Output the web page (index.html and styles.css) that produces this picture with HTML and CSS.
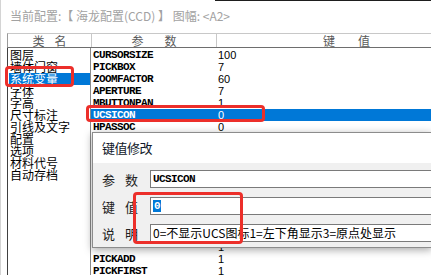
FILE: index.html
```html
<!DOCTYPE html>
<html lang="zh-CN">
<head>
    <meta charset="UTF-8">
    <title>系统变量</title>
    <link rel="stylesheet" href="styles.css">
</head>
<body>
    <div class="window">
        <!-- Current config caption -->
        <div class="caption">当前配置:【 海龙配置(CCD) 】 图幅: &lt;A2&gt;</div>

        <div class="table">
            <div class="head">
                <div class="hcell col-cat"><span>类</span><span>名</span></div>
                <div class="hcell col-name"><span>参</span><span>数</span></div>
                <div class="hcell col-value"><span>键</span><span>值</span></div>
            </div>

            <div class="body">
                <ul class="cats">
                    <li>图层</li>
                    <li>墙体门窗</li>
                    <li class="selected">系统变量</li>
                    <li>字体</li>
                    <li>字高</li>
                    <li>尺寸标注</li>
                    <li>引线及文字</li>
                    <li>配置</li>
                    <li>选项</li>
                    <li>材料代号</li>
                    <li>自动存档</li>
                </ul>

                <div class="vars">
                    <div class="row"><span class="name">CURSORSIZE</span><span class="value">100</span></div>
                    <div class="row"><span class="name">PICKBOX</span><span class="value">7</span></div>
                    <div class="row"><span class="name">ZOOMFACTOR</span><span class="value">60</span></div>
                    <div class="row"><span class="name">APERTURE</span><span class="value">7</span></div>
                    <div class="row"><span class="name">MBUTTONPAN</span><span class="value">1</span></div>
                    <div class="row selected"><span class="name">UCSICON</span><span class="value">0</span></div>
                    <div class="row"><span class="name">HPASSOC</span><span class="value">0</span></div>
                    <!-- rows hidden behind the dialog -->
                    <div class="row"></div>
                    <div class="row"></div>
                    <div class="row"></div>
                    <div class="row"></div>
                    <div class="row"></div>
                    <div class="row"></div>
                    <div class="row"></div>
                    <div class="row"></div>
                    <div class="row"></div>
                    <div class="row"><span class="name"></span><span class="value">1</span></div>
                    <div class="row"><span class="name">PICKADD</span><span class="value">1</span></div>
                    <div class="row"><span class="name">PICKFIRST</span><span class="value">1</span></div>
                </div>
            </div>
        </div>

        <!-- Edit dialog -->
        <div class="dialog">
            <div class="dialog-title">键值修改</div>
            <div class="dialog-body">
                <div class="field">
                    <label><span>参</span><span>数</span></label>
                    <div class="input mono">UCSICON</div>
                </div>
                <div class="field">
                    <label><span>键</span><span>值</span></label>
                    <div class="input mono"><span class="sel">0</span></div>
                </div>
                <div class="field">
                    <label><span>说</span><span>明</span></label>
                    <div class="input">0=不显示UCS图标1=左下角显示3=原点处显示</div>
                </div>
            </div>
        </div>

        <!-- Red annotation marks -->
        <div class="mark mark-cat"></div>
        <div class="mark mark-row"></div>
        <div class="mark mark-input"></div>
    </div>
</body>
</html>
```

FILE: styles.css
```css
/* Palette */
:root {
    --select-blue: #0078d7;
    --dialog-bg: #f0f0f0;
    --mark-red: #ec2f2a;
    --line-gray: #c8c8c8;
    --dark-line: #6e6e6e;
}

body {
    margin: 0;
    width: 431px;
    height: 275px;
    overflow: hidden;
    background: #fff;
    font-family: "Noto Sans CJK SC", sans-serif;
    font-size: 12px;
    color: #000;
}

.window {
    position: relative;
    height: 275px;
    overflow: hidden;
    border-left: 1px solid #d4d4d4;
    background: linear-gradient(to right, transparent 214px, #1e1e1e 214px) top / 100% 1px no-repeat;
}

/* Caption */
.caption {
    height: 33px;
    line-height: 32px;
    padding-left: 9px;
    color: #a2a2a2;
    white-space: nowrap;
}

/* Table */
.table {
    margin-left: 6px;
}

.head {
    display: grid;
    grid-template-columns: 84px 125px 1fr;
    height: 13px;
    border-top: 1px solid var(--line-gray);
    border-bottom: 1px solid var(--dark-line);
    border-left: 1px solid #9a9a9a;
}

.hcell {
    display: flex;
    justify-content: center;
    gap: 10px;
    line-height: 13px;
    color: #5a5a5a;
    border-right: 1px solid var(--line-gray);
}

.col-name {
    gap: 21px;
}

.col-value {
    justify-content: flex-start;
    gap: 23px;
    padding-left: 106px;
    border-right: none;
}

.body {
    display: grid;
    grid-template-columns: 84px 1fr;
    height: 240px;
}

.cats {
    list-style: none;
    margin: 0;
    padding: 1px 0 0 1px;
    border-left: 1px solid #404040;
    border-right: 1px solid #8a8a8a;
}

.cats li {
    height: 12px;
    line-height: 12px;
    white-space: nowrap;
    padding-left: 1px;
}

.cats li.selected {
    background: var(--select-blue);
    color: #fff;
}

.vars {
    padding-top: 1px;
}

.row {
    display: grid;
    grid-template-columns: 124px 1fr;
    height: 12px;
    line-height: 12px;
}

.row.selected {
    background: var(--select-blue);
    color: #fff;
}

.name,
.mono {
    font-family: "Liberation Mono", monospace;
    font-weight: bold;
    font-size: 11px;
    letter-spacing: -0.6px;
}

.name {
    padding-left: 2px;
}

.value {
    font-family: "Liberation Sans", sans-serif;
    font-size: 11px;
    padding-left: 3px;
}

/* Dialog */
.dialog {
    position: absolute;
    left: 91px;
    top: 132px;
    width: 339px;
    height: 114px;
    border: 1px solid #8c8c8c;
    border-right: none;
    box-shadow: 0 2px 8px rgba(0, 0, 0, 0.35);
    background: var(--dialog-bg);
}

.dialog-title {
    height: 30px;
    line-height: 29px;
    padding-left: 9px;
    background: #fff;
    font-size: 13px;
    letter-spacing: -0.5px;
    color: #101828;
}

.dialog-body {
    display: flex;
    flex-direction: column;
    gap: 9px;
    padding-top: 7px;
}

.field {
    display: flex;
    align-items: center;
    height: 18px;
}

.field label {
    display: flex;
    gap: 10px;
    width: 57px;
    padding-left: 9px;
    box-sizing: border-box;
    font-size: 13px;
    color: #222;
}

.input {
    flex: 1;
    height: 18px;
    box-sizing: border-box;
    border: 1px solid #7a7a7a;
    border-right: none;
    background: #fff;
    line-height: 16px;
    padding-left: 2px;
    white-space: nowrap;
    overflow: hidden;
}

.input .sel {
    background: var(--select-blue);
    color: #fff;
    padding: 0 1px;
}

/* Red annotation marks */
.mark {
    position: absolute;
    box-sizing: border-box;
    border: 3px solid var(--mark-red);
    border-radius: 4px;
}

.mark-cat {
    left: 4px;
    top: 66px;
    width: 69px;
    height: 21px;
}

.mark-row {
    left: 85px;
    top: 105px;
    width: 179px;
    height: 17px;
}

.mark-input {
    left: 132px;
    top: 192px;
    width: 110px;
    height: 52px;
}
```
